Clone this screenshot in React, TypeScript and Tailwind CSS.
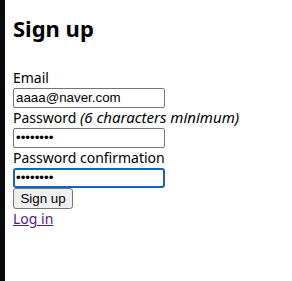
export default function App() {
  return (
    <div className="flex min-h-[281px] bg-white font-['Noto_Sans',sans-serif]">
      <div className="w-[5px] shrink-0 bg-[#0a0a0f]" />
      <form className="flex flex-col items-start px-2 pt-[13px] text-[14px] leading-[20px] text-black">
        <h1 className="mb-[25px] text-[22px] font-bold leading-[30px]">Sign up</h1>
        <label>Email</label>
        <input
          className="h-[20px] w-[152px] rounded-[2px] border border-[#767676] bg-white px-[2px] font-['Liberation_Sans',Arial,sans-serif] text-[13.33px] text-black outline-none"
          defaultValue="aaaa@naver.com"
        />
        <label className="h-[20px]">
          Password <em className="text-[15px] leading-none">(6 characters minimum)</em>
        </label>
        <input
          type="password"
          className="h-[20px] w-[152px] rounded-[2px] border border-[#767676] bg-white px-[2px] font-['Liberation_Sans',Arial,sans-serif] text-[13.33px] text-black outline-none"
          defaultValue="12345678"
        />
        <label>Password confirmation</label>
        <input
          type="password"
          className="h-[20px] w-[152px] rounded-[3px] border-2 border-[#1565c0] bg-white px-[1px] font-['Liberation_Sans',Arial,sans-serif] text-[13.33px] text-black outline-none"
          defaultValue="12345678"
        />
        <button
          type="button"
          className="h-[21px] w-[60px] rounded-[3px] border border-[#767676] bg-[#efefef] p-0 font-['Liberation_Sans',Arial,sans-serif] text-[13.33px] leading-[19px] text-black"
        >
          Sign up
        </button>
        <a href="#" className="text-[#551a8b] underline">Log in</a>
      </form>
    </div>
  );
}
